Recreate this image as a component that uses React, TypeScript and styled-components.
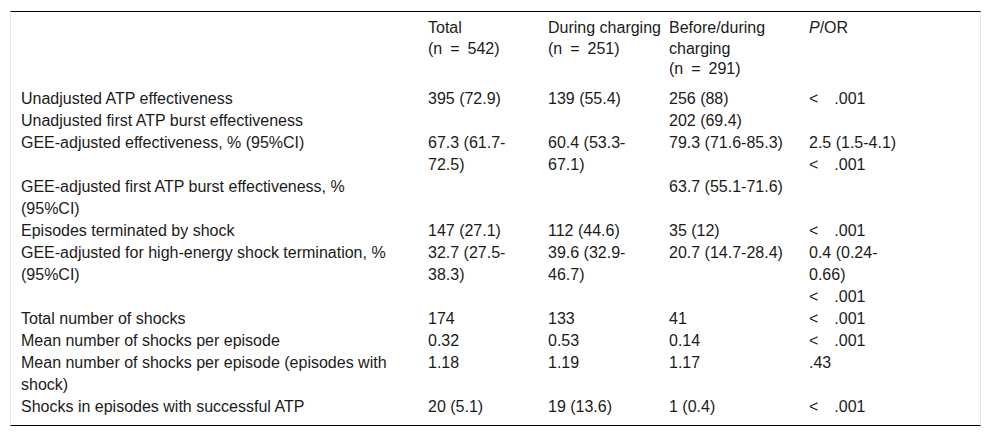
import React from "react";
import styled, { createGlobalStyle } from "styled-components";

const Global = createGlobalStyle`
  html, body { margin: 0; padding: 0; background: #ffffff; }
  body { font-family: "Liberation Sans", Arial, Helvetica, sans-serif; color: #1b1b1b; }
`;

const Page = styled.div`
  padding: 11px 11px 0 10px;
`;

const TableBox = styled.div`
  box-sizing: border-box;
  width: 971px;
  border-top: 1px solid #000;
  border-bottom: 1px solid #000;
  border-left: 1px solid #e6e6e6;
  border-right: 1px solid #e6e6e6;
  padding-bottom: 7px;
  font-size: 16px;
`;

const Row = styled.div<{ $head?: boolean }>`
  display: grid;
  grid-template-columns: 407px 120px 121px 140px 1fr;
  line-height: ${(p) => (p.$head ? "20.5px" : "22px")};
  padding: ${(p) => (p.$head ? "6px 0 8px" : "0")};
`;

const Cell = styled.div`
  padding-left: 10px;
`;

const Line = styled.span`
  display: block;
  white-space: nowrap;
`;

const Em = styled.i`
  font-style: italic;
`;

type Content = string | string[];

const lines = (c: Content) => (Array.isArray(c) ? c : c ? [c] : []);

const LT = "<\u2003.001";

const header: Content[] = [
  "",
  ["Total", "(n\u2002=\u2002542)"],
  ["During charging", "(n\u2002=\u2002251)"],
  ["Before/during", "charging", "(n\u2002=\u2002291)"],
];

const rows: Content[][] = [
  ["Unadjusted ATP effectiveness", "395 (72.9)", "139 (55.4)", "256 (88)", LT],
  ["Unadjusted first ATP burst effectiveness", "", "", "202 (69.4)", ""],
  [
    "GEE-adjusted effectiveness, % (95%CI)",
    ["67.3 (61.7-", "72.5)"],
    ["60.4 (53.3-", "67.1)"],
    "79.3 (71.6-85.3)",
    ["2.5 (1.5-4.1)", LT],
  ],
  [["GEE-adjusted first ATP burst effectiveness, %", "(95%CI)"], "", "", "63.7 (55.1-71.6)", ""],
  ["Episodes terminated by shock", "147 (27.1)", "112 (44.6)", "35 (12)", LT],
  [
    ["GEE-adjusted for high-energy shock termination, %", "(95%CI)"],
    ["32.7 (27.5-", "38.3)"],
    ["39.6 (32.9-", "46.7)"],
    "20.7 (14.7-28.4)",
    ["0.4 (0.24-", "0.66)", LT],
  ],
  ["Total number of shocks", "174", "133", "41", LT],
  ["Mean number of shocks per episode", "0.32", "0.53", "0.14", LT],
  [["Mean number of shocks per episode (episodes with", "shock)"], "1.18", "1.19", "1.17", ".43"],
  ["Shocks in episodes with successful ATP", "20 (5.1)", "19 (13.6)", "1 (0.4)", LT],
];

export default function App() {
  return (
    <>
      <Global />
      <Page>
        <TableBox role="table">
          <Row $head role="row">
            {header.map((c, i) => (
              <Cell key={i} role="columnheader">
                {lines(c).map((l, j) => (
                  <Line key={j}>{l}</Line>
                ))}
              </Cell>
            ))}
            <Cell role="columnheader">
              <Line>
                <Em>P</Em>/OR
              </Line>
            </Cell>
          </Row>
          {rows.map((r, i) => (
            <Row key={i} role="row">
              {r.map((c, k) => (
                <Cell key={k} role="cell">
                  {lines(c).map((l, j) => (
                    <Line key={j}>{l}</Line>
                  ))}
                </Cell>
              ))}
            </Row>
          ))}
        </TableBox>
      </Page>
    </>
  );
}
